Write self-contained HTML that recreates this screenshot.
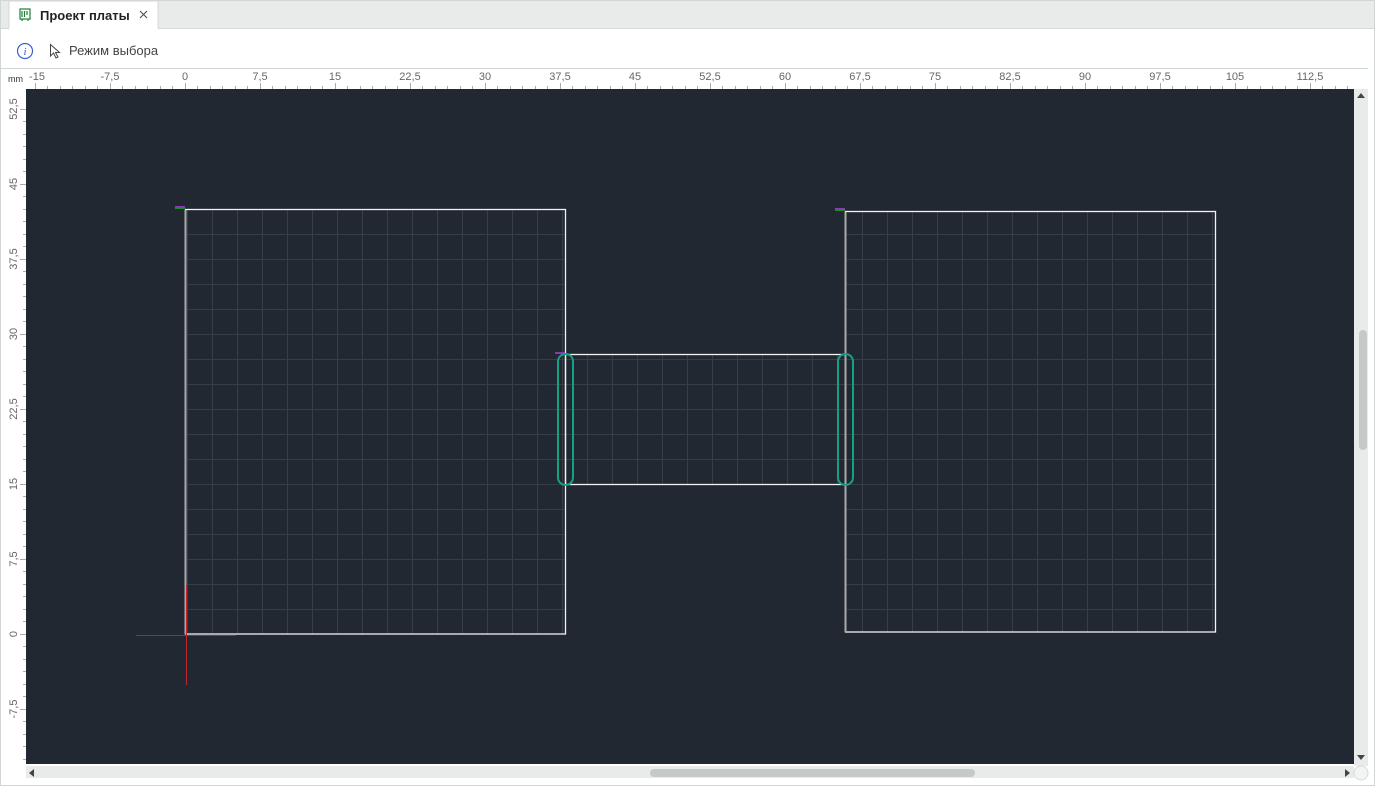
<!DOCTYPE html>
<html><head><meta charset="utf-8"><style>
html,body{margin:0;padding:0;width:1375px;height:786px;overflow:hidden;background:#fff;font-family:"Liberation Sans",sans-serif;}
.frame{position:absolute;left:0;top:0;width:1373px;height:784px;border:1px solid #cfd6d4;}
</style></head><body>
<div class="frame"></div>
<svg width="1375" height="786" style="position:absolute;left:0;top:0" xmlns="http://www.w3.org/2000/svg" font-family="Liberation Sans, sans-serif">
<rect x="1" y="1" width="1373" height="27" fill="#e9ebea"/>
<rect x="9" y="1" width="149" height="28" fill="#fff" stroke="#d4d8d6"/>
<rect x="9" y="28" width="149" height="2" fill="#fff"/>
<line x1="1" y1="28.5" x2="9" y2="28.5" stroke="#d4d8d6"/>
<line x1="158" y1="28.5" x2="1374" y2="28.5" stroke="#d4d8d6"/>
<g stroke="#1e7d3a" fill="none" stroke-width="1.2">
<rect x="20" y="9" width="10" height="10"/>
<line x1="22" y1="11" x2="22" y2="17"/><line x1="24.5" y1="11" x2="24.5" y2="17"/><line x1="27" y1="11" x2="27" y2="15"/>
<line x1="22" y1="19" x2="22" y2="21"/><line x1="28" y1="19" x2="28" y2="21"/>
</g>
<text x="40" y="20" font-size="13" font-weight="bold" fill="#222">Проект платы</text>
<path d="M140 11l7 7M147 11l-7 7" stroke="#555" stroke-width="1.2"/>
<circle cx="25" cy="51" r="7.5" fill="none" stroke="#3b5fd6" stroke-width="1.2"/>
<text x="25" y="55" font-size="11" font-style="italic" font-family="Liberation Serif, serif" fill="#3b5fd6" text-anchor="middle">i</text>
<path d="M50.5 44.5 L50.5 56 L53.5 53 L56 58 L58 57 L55.5 52.5 L59.5 52.5 Z" fill="none" stroke="#444" stroke-width="1"/>
<text x="69" y="55" font-size="13" fill="#444">Режим выбора</text>
<line x1="0" y1="68.5" x2="1368" y2="68.5" stroke="#cfd6d4"/>
<text x="8" y="82" font-size="9" fill="#333">mm</text>
<g font-size="11" fill="#666" text-anchor="middle">
<text x="37" y="80">-15</text><text x="110" y="80">-7,5</text><text x="185" y="80">0</text><text x="260" y="80">7,5</text><text x="335" y="80">15</text><text x="410" y="80">22,5</text><text x="485" y="80">30</text><text x="560" y="80">37,5</text><text x="635" y="80">45</text><text x="710" y="80">52,5</text><text x="785" y="80">60</text><text x="860" y="80">67,5</text><text x="935" y="80">75</text><text x="1010" y="80">82,5</text><text x="1085" y="80">90</text><text x="1160" y="80">97,5</text><text x="1235" y="80">105</text><text x="1310" y="80">112,5</text>
</g>
<g font-size="11" fill="#666" text-anchor="middle">
<text transform="translate(17,109) rotate(-90)">52,5</text>
<text transform="translate(17,184) rotate(-90)">45</text>
<text transform="translate(17,259) rotate(-90)">37,5</text>
<text transform="translate(17,334) rotate(-90)">30</text>
<text transform="translate(17,409) rotate(-90)">22,5</text>
<text transform="translate(17,484) rotate(-90)">15</text>
<text transform="translate(17,559) rotate(-90)">7,5</text>
<text transform="translate(17,634) rotate(-90)">0</text>
<text transform="translate(17,709) rotate(-90)">-7,5</text>
</g>
<path stroke="#aaa" stroke-width="1" d="
M35.5 83v6M47.5 86v3M60.5 86v3M72.5 86v3M85.5 86v3M97.5 86v3M110.5 83v6M122.5 86v3M135.5 86v3M147.5 86v3M160.5 86v3M172.5 86v3M185.5 83v6M197.5 86v3M210.5 86v3M222.5 86v3M235.5 86v3M247.5 86v3M260.5 83v6M272.5 86v3M285.5 86v3M297.5 86v3M310.5 86v3M322.5 86v3M335.5 83v6M347.5 86v3M360.5 86v3M372.5 86v3M385.5 86v3M397.5 86v3M410.5 83v6M422.5 86v3M435.5 86v3M447.5 86v3M460.5 86v3M472.5 86v3M485.5 83v6M497.5 86v3M510.5 86v3M522.5 86v3M535.5 86v3M547.5 86v3M560.5 83v6M572.5 86v3M585.5 86v3M597.5 86v3M610.5 86v3M622.5 86v3M635.5 83v6M647.5 86v3M660.5 86v3M672.5 86v3M685.5 86v3M697.5 86v3M710.5 83v6M722.5 86v3M735.5 86v3M747.5 86v3M760.5 86v3M772.5 86v3M785.5 83v6M797.5 86v3M810.5 86v3M822.5 86v3M835.5 86v3M847.5 86v3M860.5 83v6M872.5 86v3M885.5 86v3M897.5 86v3M910.5 86v3M922.5 86v3M935.5 83v6M947.5 86v3M960.5 86v3M972.5 86v3M985.5 86v3M997.5 86v3M1010.5 83v6M1022.5 86v3M1035.5 86v3M1047.5 86v3M1060.5 86v3M1072.5 86v3M1085.5 83v6M1097.5 86v3M1110.5 86v3M1122.5 86v3M1135.5 86v3M1147.5 86v3M1160.5 83v6M1172.5 86v3M1185.5 86v3M1197.5 86v3M1210.5 86v3M1222.5 86v3M1235.5 83v6M1247.5 86v3M1260.5 86v3M1272.5 86v3M1285.5 86v3M1297.5 86v3M1310.5 83v6M1322.5 86v3M1335.5 86v3M1347.5 86v3
M20 109.5h6M23 121.5h3M23 134.5h3M23 146.5h3M23 159.5h3M23 171.5h3M20 184.5h6M23 196.5h3M23 209.5h3M23 221.5h3M23 234.5h3M23 246.5h3M20 259.5h6M23 271.5h3M23 284.5h3M23 296.5h3M23 309.5h3M23 321.5h3M20 334.5h6M23 346.5h3M23 359.5h3M23 371.5h3M23 384.5h3M23 396.5h3M20 409.5h6M23 421.5h3M23 434.5h3M23 446.5h3M23 459.5h3M23 471.5h3M20 484.5h6M23 496.5h3M23 509.5h3M23 521.5h3M23 534.5h3M23 546.5h3M20 559.5h6M23 571.5h3M23 584.5h3M23 596.5h3M23 609.5h3M23 621.5h3M20 634.5h6M23 646.5h3M23 659.5h3M23 671.5h3M23 684.5h3M23 696.5h3M20 709.5h6M23 721.5h3M23 734.5h3M23 746.5h3M23 759.5h3"/>
<rect x="26" y="89" width="1328" height="675" fill="#222831"/>
<defs>
<pattern id="g" x="187" y="9" width="25" height="25" patternUnits="userSpaceOnUse">
<path d="M0.5 0V25M0 0.5H25" stroke="#373e46" stroke-width="1" fill="none"/>
</pattern>
</defs>
<rect x="186" y="210" width="379" height="424" fill="url(#g)"/>
<rect x="566" y="355" width="279" height="129" fill="url(#g)"/>
<rect x="846" y="212" width="369" height="420" fill="url(#g)"/>
<g fill="none" stroke="#f2f2f2" stroke-width="1.3">
<rect x="185.5" y="209.5" width="380" height="424.5"/>
<rect x="565.5" y="354.5" width="280" height="130"/>
<rect x="845.5" y="211.5" width="370" height="420.5"/>
</g>
<line x1="185.5" y1="210" x2="185.5" y2="634" stroke="#aaa" stroke-width="2"/>
<line x1="845.5" y1="212" x2="845.5" y2="632" stroke="#aaa" stroke-width="2"/>
<rect x="175" y="206" width="10" height="2" fill="#8a3ab0"/><rect x="175" y="208" width="10" height="1" fill="#1e8a2e"/>
<rect x="835" y="208" width="10" height="2" fill="#8a3ab0"/><rect x="835" y="210" width="10" height="1" fill="#1e8a2e"/>
<rect x="555" y="352" width="10" height="2" fill="#8a3ab0"/>
<rect x="558" y="354" width="15" height="131" rx="7.5" fill="none" stroke="#14a284" stroke-width="2"/>
<rect x="838" y="354" width="15" height="131" rx="7.5" fill="none" stroke="#14a284" stroke-width="2"/>
<line x1="186.5" y1="585" x2="186.5" y2="685" stroke="#c0262c" stroke-width="1"/>
<line x1="136" y1="635.5" x2="236" y2="635.5" stroke="#a8262c" stroke-width="1"/>
<rect x="1354" y="89" width="14" height="677" fill="#e9ebea"/>
<rect x="1359" y="330" width="8" height="120" rx="4" fill="#c5c9c8"/>
<path d="M1357 98h8l-4-5z M1357 755h8l-4 5z" fill="#444"/>
<rect x="26" y="766" width="1328" height="12" fill="#e9ebea"/>
<rect x="650" y="769" width="325" height="8" rx="4" fill="#c5c9c8"/>
<path d="M34 769v8l-5-4z M1345 769v8l5-4z" fill="#444"/>
<circle cx="1361" cy="773" r="7" fill="#f3f4f4" stroke="#d6dad9"/>
</svg>
</body></html>
